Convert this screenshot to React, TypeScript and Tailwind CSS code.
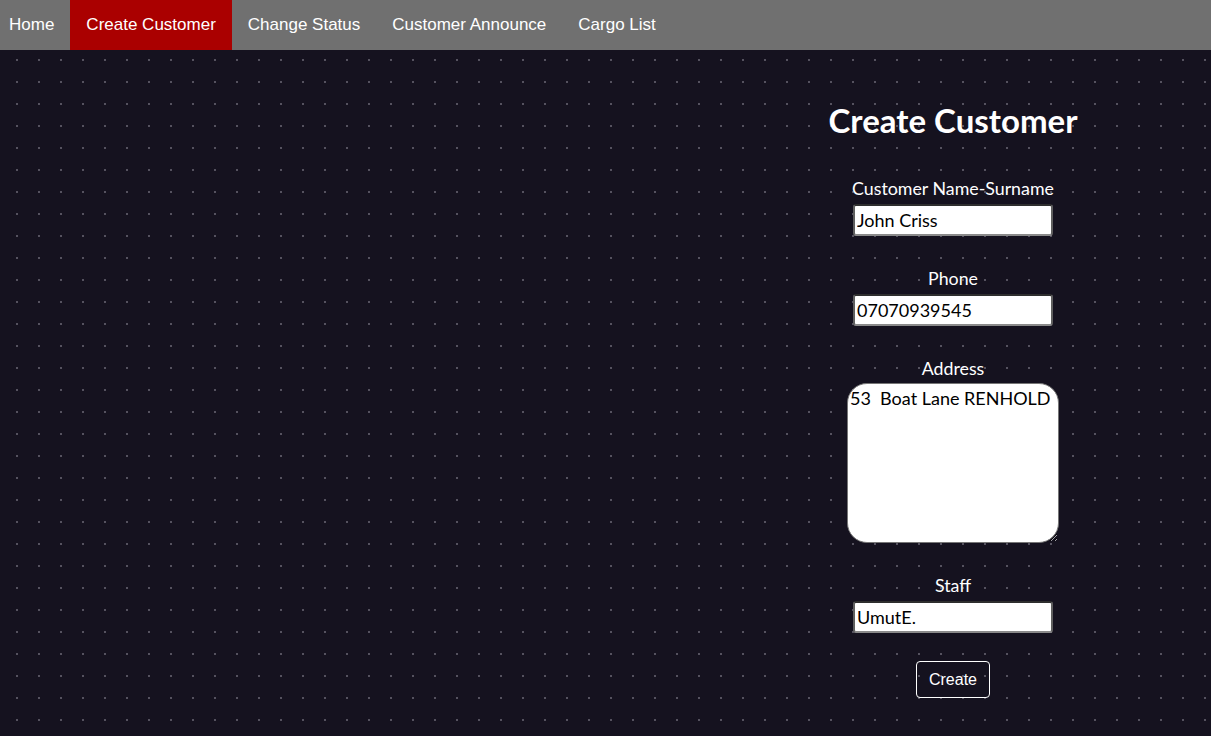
import React from "react";

const navItems = ["Home", "Create Customer", "Change Status", "Customer Announce", "Cargo List"];

const Field = ({ label, value }: { label: string; value: string }) => (
  <div className="flex flex-col items-center">
    <label className="text-[17.8px] leading-5 text-white mb-[6px]">{label}</label>
    <input
      defaultValue={value}
      className="w-[200px] h-8 bg-white text-black text-[18px] px-[2px] rounded-[3px] border-2 border-[#2e2e2e] border-b-[#8a8a8a] border-x-[#5f5f5f] outline-none"
    />
  </div>
);

const App = () => {
  return (
    <div className="min-h-screen flex flex-col font-['Lato',sans-serif]">
      <nav className="h-[50px] bg-[#707070] flex font-['Liberation_Sans',Arial,sans-serif] text-[17px] text-white">
        {navItems.map((item, i) => (
          <a
            key={item}
            href="#"
            className={
              (i === 0 ? "pl-[9px] pr-4 " : "px-4 ") +
              "flex items-center h-full " +
              (item === "Create Customer" ? "bg-[#aa0000]" : "")
            }
          >
            {item}
          </a>
        ))}
      </nav>

      <main className="flex-1 min-h-[686px] bg-[#15121f] bg-[radial-gradient(circle,#55525f_0.8px,transparent_1.1px)] bg-[length:22px_22px] bg-[position:6px_-1px] flex justify-end pr-[108px]">
        <div className="w-[300px] flex flex-col items-center pt-[50px]">
          <h1 className="text-[33px] leading-10 font-bold text-white">Create Customer</h1>

          <div className="mt-[38px] flex flex-col gap-8">
            <Field label="Customer Name-Surname" value="John Criss" />
            <Field label="Phone" value="07070939545" />
            <div className="flex flex-col items-center">
              <label className="text-[17.8px] leading-5 text-white mb-[5px]">Address</label>
              <textarea
                defaultValue="53  Boat Lane RENHOLD"
                className="w-[212px] h-40 bg-white text-black text-[18px] leading-6 px-[2px] py-[2px] rounded-[20px] border border-[#767676] outline-none"
              />
            </div>
            <Field label="Staff" value="UmutE." />
          </div>

          <button className="mt-7 w-[74px] h-[37px] border border-white rounded-[4px] text-white text-[16px] font-['Liberation_Sans',Arial,sans-serif]">
            Create
          </button>
        </div>
      </main>
    </div>
  );
};

export default App;
